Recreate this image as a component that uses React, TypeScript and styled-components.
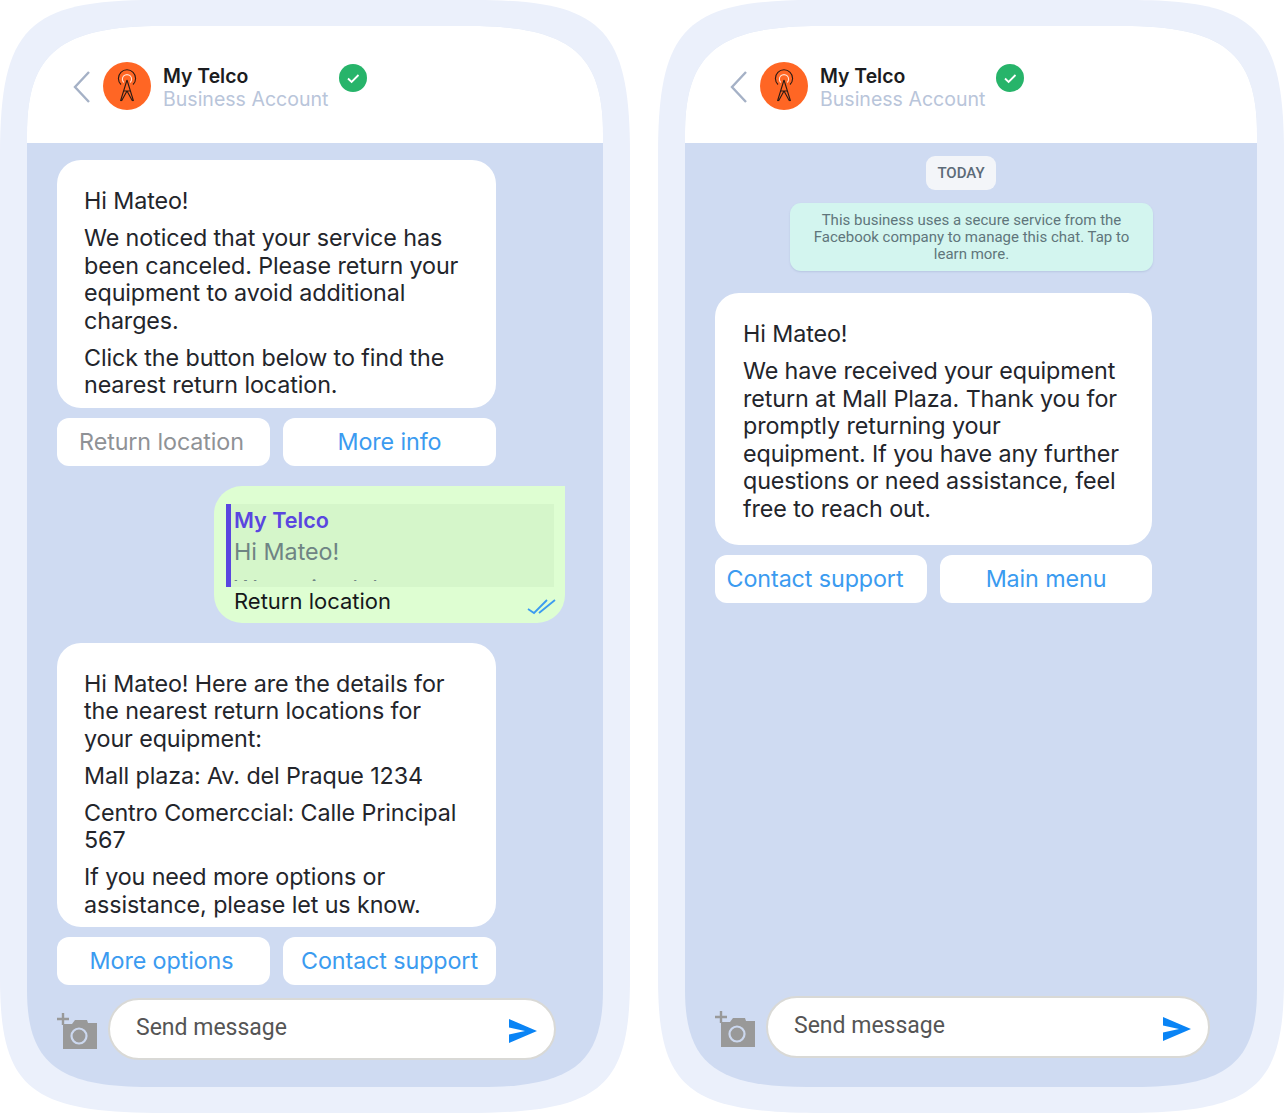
import React from 'react';
import styled, {createGlobalStyle} from 'styled-components';

// rounded rect with soft, squircle-like corners, for clip-path
const softRect = (w: number, h: number, top: number[], bottom: number[], c: number): string => {
  const [tx, ty] = top;
  const [bx, by] = bottom;
  return [
    `M0 ${ty}`,
    `C0 ${ty * c} ${tx * c} 0 ${tx} 0`,
    `L${w - tx} 0`,
    `C${w - tx * c} 0 ${w} ${ty * c} ${w} ${ty}`,
    `L${w} ${h - by}`,
    `C${w} ${h - by * c} ${w - bx * c} ${h} ${w - bx} ${h}`,
    `L${bx} ${h}`,
    `C${bx * c} ${h} 0 ${h - by * c} 0 ${h - by}`,
    'Z',
  ].join(' ');
};

const Global = createGlobalStyle`
  html, body {
    margin: 0;
    padding: 0;
    background: #fff;
  }
  body {
    font-family: Inter, "Liberation Sans", sans-serif;
  }
`;

const Page = styled.div`
  display: flex;
  gap: 28px;
  width: 1284px;
  height: 1113px;
`;
const Phone = styled.div<{$width: number}>`
  box-sizing: border-box;
  width: ${({$width}) => $width}px;
  height: 1113px;
  padding: 26px 27px;
  background: #ebf0fb;
  clip-path: path('${({$width}) => softRect($width, 1113, [155, 155], [165, 135], 0.18)}');
  display: flex;
`;
const Screen = styled.div<{$width: number}>`
  flex: 1;
  display: flex;
  flex-direction: column;
  background: #cfdbf2;
  clip-path: path('${({$width}) => softRect($width, 1061, [135, 108], [122, 97], 0.25)}');
`;
const Header = styled.div<{$left: number}>`
  height: 117px;
  flex: none;
  background: #fff;
  display: flex;
  align-items: center;
  padding-left: ${({$left}) => $left}px;
  padding-top: 3px;
  box-sizing: border-box;
`;
const Back = styled.svg`
  width: 20px;
  height: 34px;
  margin-top: 2px;
  margin-right: 11px;
  flex: none;
`;
const Avatar = styled.div`
  width: 48px;
  height: 48px;
  border-radius: 50%;
  background: #ff6624;
  display: flex;
  align-items: center;
  justify-content: center;
  flex: none;
  margin-right: 12px;
`;
const Titles = styled.div`
  display: flex;
  flex-direction: column;
  margin-top: 4px;
`;
const Title = styled.div`
  font-size: 19.4px;
  font-weight: 600;
  line-height: 23px;
  color: #1b1c20;
`;
const Subtitle = styled.div`
  font-size: 19.55px;
  line-height: 23px;
  color: #b9c5da;
  white-space: nowrap;
`;
const Verified = styled.svg`
  width: 28px;
  height: 28px;
  margin-left: 11px;
  margin-bottom: 16px;
  flex: none;
`;
const Chat = styled.div<{$top: number; $bottom: number; $left: number}>`
  flex: 1;
  display: flex;
  flex-direction: column;
  padding: ${({$top}) => $top}px 0 ${({$bottom}) => $bottom}px ${({$left}) => $left}px;
`;
const Bubble = styled.div<{$width: number; $left: number; $bottom: number}>`
  box-sizing: border-box;
  width: ${({$width}) => $width}px;
  background: #fff;
  border-radius: 24px;
  padding: 27px 27px ${({$bottom}) => $bottom}px ${({$left}) => $left}px;
  font-size: 23.3px;
  line-height: 27.5px;
  color: #23252b;
  letter-spacing: -0.1px;
`;
const Para = styled.p`
  margin: 0 0 9.5px;
  &:last-child {
    margin-bottom: 0;
  }
`;
const Actions = styled.div<{$width: number; $gap: number}>`
  display: grid;
  grid-template-columns: 1fr 1fr;
  gap: 13px;
  width: ${({$width}) => $width}px;
  margin-top: 10px;
  margin-bottom: ${({$gap}) => $gap}px;
`;
const Action = styled.div<{$muted?: boolean; $inset?: number}>`
  box-sizing: border-box;
  height: 48px;
  padding-right: ${({$inset}) => $inset ?? 0}px;
  padding-bottom: 1px;
  background: #fff;
  border-radius: 12px;
  display: flex;
  align-items: center;
  justify-content: center;
  font-size: 23.3px;
  letter-spacing: -0.1px;
  white-space: nowrap;
  color: ${({$muted}) => ($muted ? '#8f9296' : '#3b9bf0')};
`;
const Reply = styled.div`
  position: relative;
  box-sizing: border-box;
  align-self: flex-start;
  margin-left: 157px;
  margin-bottom: 20px;
  width: 351px;
  height: 137px;
  padding: 18px 11px 0 12px;
  background: #defed2;
  border-radius: 28px 0 28px 28px;
`;
const Quote = styled.div`
  box-sizing: border-box;
  height: 83px;
  padding-left: 3px;
  background: #d5f6ca;
  border-left: 5px solid #5a46e0;
`;
const QuoteClip = styled.div`
  height: 77px;
  padding-top: 1px;
  box-sizing: border-box;
  overflow: hidden;
  font-size: 23.3px;
  line-height: 31px;
`;
const QuoteName = styled.div`
  font-size: 21.6px;
  font-weight: 600;
  color: #5a46e0;
`;
const QuoteText = styled.div<{$top?: number}>`
  margin-top: ${({$top}) => $top ?? 0}px;
  color: #6f8484;
`;
const ReplyText = styled.div`
  margin-left: 8px;
  font-size: 22px;
  line-height: 28px;
  color: #15181a;
`;
const Ticks = styled.svg`
  position: absolute;
  right: 9px;
  bottom: 8px;
  width: 30px;
  height: 16px;
`;
const DayPill = styled.div`
  width: 70px;
  height: 34px;
  margin-left: 211px;
  flex: none;
  box-sizing: border-box;
  border-radius: 9px;
  background: #f3f5f9;
  display: flex;
  align-items: center;
  justify-content: center;
  font-family: Roboto, sans-serif;
  font-size: 15px;
  font-weight: 500;
  color: #5c6b78;
`;
const Notice = styled.div`
  box-sizing: border-box;
  width: 363px;
  height: 68px;
  flex: none;
  margin: 13px 0 22px 75px;
  padding: 9px 20px 0;
  border-radius: 11px;
  background: #d3f5ef;
  font-family: Roboto, sans-serif;
  font-size: 15px;
  line-height: 17px;
  text-align: center;
  color: #60757b;
  box-shadow: 0 1px 2px rgba(90, 120, 160, 0.2);
`;
const Composer = styled.div<{$width: number}>`
  margin-top: auto;
  display: flex;
  align-items: center;
  gap: 11px;
  width: ${({$width}) => $width}px;
`;
const Camera = styled.svg`
  width: 40px;
  height: 38px;
  flex: none;
  margin-top: 2px;
`;
const Input = styled.div`
  flex: 1;
  box-sizing: border-box;
  height: 62px;
  border-radius: 31px;
  background: #fff;
  border: 2px solid #d9d9d6;
  display: flex;
  align-items: center;
  justify-content: space-between;
  padding: 0 16px 4px 26px;
  font-family: Roboto, sans-serif;
  font-size: 23px;
  color: #555;
`;
const Send = styled.svg`
  width: 30px;
  height: 26px;
  margin-top: 8px;
  flex: none;
`;

function Tower() {
  return (
    <svg width="28" height="34" viewBox="0 0 28 34" fill="none" stroke="#2b1a14" strokeWidth="1.1">
      <path d="M8 15.5a8.6 8.6 0 1 1 12 0" />
      <path d="M10.8 13.5a4.6 4.6 0 1 1 6.4 0" stroke="#ffe3d4" />
      <path d="M14 11 L7.5 32 M14 11 L20.5 32 M10.5 22 L17.5 22 M14 22 L8.5 32 M14 22 L19.5 32" />
    </svg>
  );
}

function Head({left}: {left: number}) {
  return (
    <Header $left={left}>
      <Back viewBox="0 0 20 34" fill="none" stroke="#a5b1c6" strokeWidth="2.4">
        <path d="M17 2 L3 17 L17 32" />
      </Back>
      <Avatar>
        <Tower />
      </Avatar>
      <Titles>
        <Title>My Telco</Title>
        <Subtitle>Business Account</Subtitle>
      </Titles>
      <Verified viewBox="0 0 28 28">
        <circle cx="14" cy="14" r="14" fill="#27b46a" />
        <path d="M9 14.5 L12.6 18 L19.5 11" fill="none" stroke="#fff" strokeWidth="1.8" />
      </Verified>
    </Header>
  );
}

function Footer({width}: {width: number}) {
  return (
    <Composer $width={width}>
      <Camera viewBox="0 0 40 38">
        <path d="M6 13 H15 L18 9 H30 L31 12 H40 V38 H6 Z" fill="#999" />
        <circle cx="22" cy="25" r="7.5" fill="none" stroke="#ccd8ef" strokeWidth="2.2" />
        <path d="M0 8 H12 M6 2 V14" stroke="#999" strokeWidth="2.4" />
      </Camera>
      <Input>
        Send message
        <Send viewBox="0 0 30 26">
          <path d="M1 1 L29 13 L1 25 L1 16.5 L17 13 L1 9.5 Z" fill="#0a84f5" />
        </Send>
      </Input>
    </Composer>
  );
}

export default function App() {
  return (
    <Page>
      <Global />
      <Phone $width={630}>
        <Screen $width={576}>
          <Head left={45} />
          <Chat $top={17} $bottom={27} $left={30}>
            <Bubble $width={439} $left={27} $bottom={9}>
              <Para>Hi Mateo!</Para>
              <Para>We noticed that your service has been canceled. Please return your equipment to avoid additional charges.</Para>
              <Para>Click the button below to find the nearest return location.</Para>
            </Bubble>
            <Actions $width={439} $gap={20}>
              <Action $muted $inset={4}>Return location</Action>
              <Action>More info</Action>
            </Actions>
            <Reply>
              <Quote>
                <QuoteClip>
                  <QuoteName>My Telco</QuoteName>
                  <QuoteText>Hi Mateo!</QuoteText>
                  <QuoteText $top={6}>We noticed that</QuoteText>
                </QuoteClip>
              </Quote>
              <ReplyText>Return location</ReplyText>
              <Ticks viewBox="0 0 30 16" fill="none" stroke="#3b9bf0" strokeWidth="1.8">
                <path d="M2 10 L8 14 L21 1 M13 14 L29 1" />
              </Ticks>
            </Reply>
            <Bubble $width={439} $left={27} $bottom={9}>
              <Para>Hi Mateo! Here are the details for the nearest return locations for your equipment:</Para>
              <Para>Mall plaza: Av. del Praque 1234</Para>
              <Para>Centro Comerccial: Calle Principal 567</Para>
              <Para>If you need more options or assistance, please let us know.</Para>
            </Bubble>
            <Actions $width={439} $gap={0}>
              <Action $inset={4}>More options</Action>
              <Action>Contact support</Action>
            </Actions>
            <Footer width={499} />
          </Chat>
        </Screen>
      </Phone>
      <Phone $width={626}>
        <Screen $width={572}>
          <Head left={44} />
          <Chat $top={13} $bottom={29} $left={30}>
            <DayPill>TODAY</DayPill>
            <Notice>This business uses a secure service from the Facebook company to manage this chat. Tap to learn more.</Notice>
            <Bubble $width={437} $left={28} $bottom={23}>
              <Para>Hi Mateo!</Para>
              <Para>We have received your equipment return at Mall Plaza. Thank you for promptly returning your equipment. If you have any further questions or need assistance, feel free to reach out.</Para>
            </Bubble>
            <Actions $width={437} $gap={0}>
              <Action $inset={12}>Contact support</Action>
              <Action>Main menu</Action>
            </Actions>
            <Footer width={495} />
          </Chat>
        </Screen>
      </Phone>
    </Page>
  );
}
